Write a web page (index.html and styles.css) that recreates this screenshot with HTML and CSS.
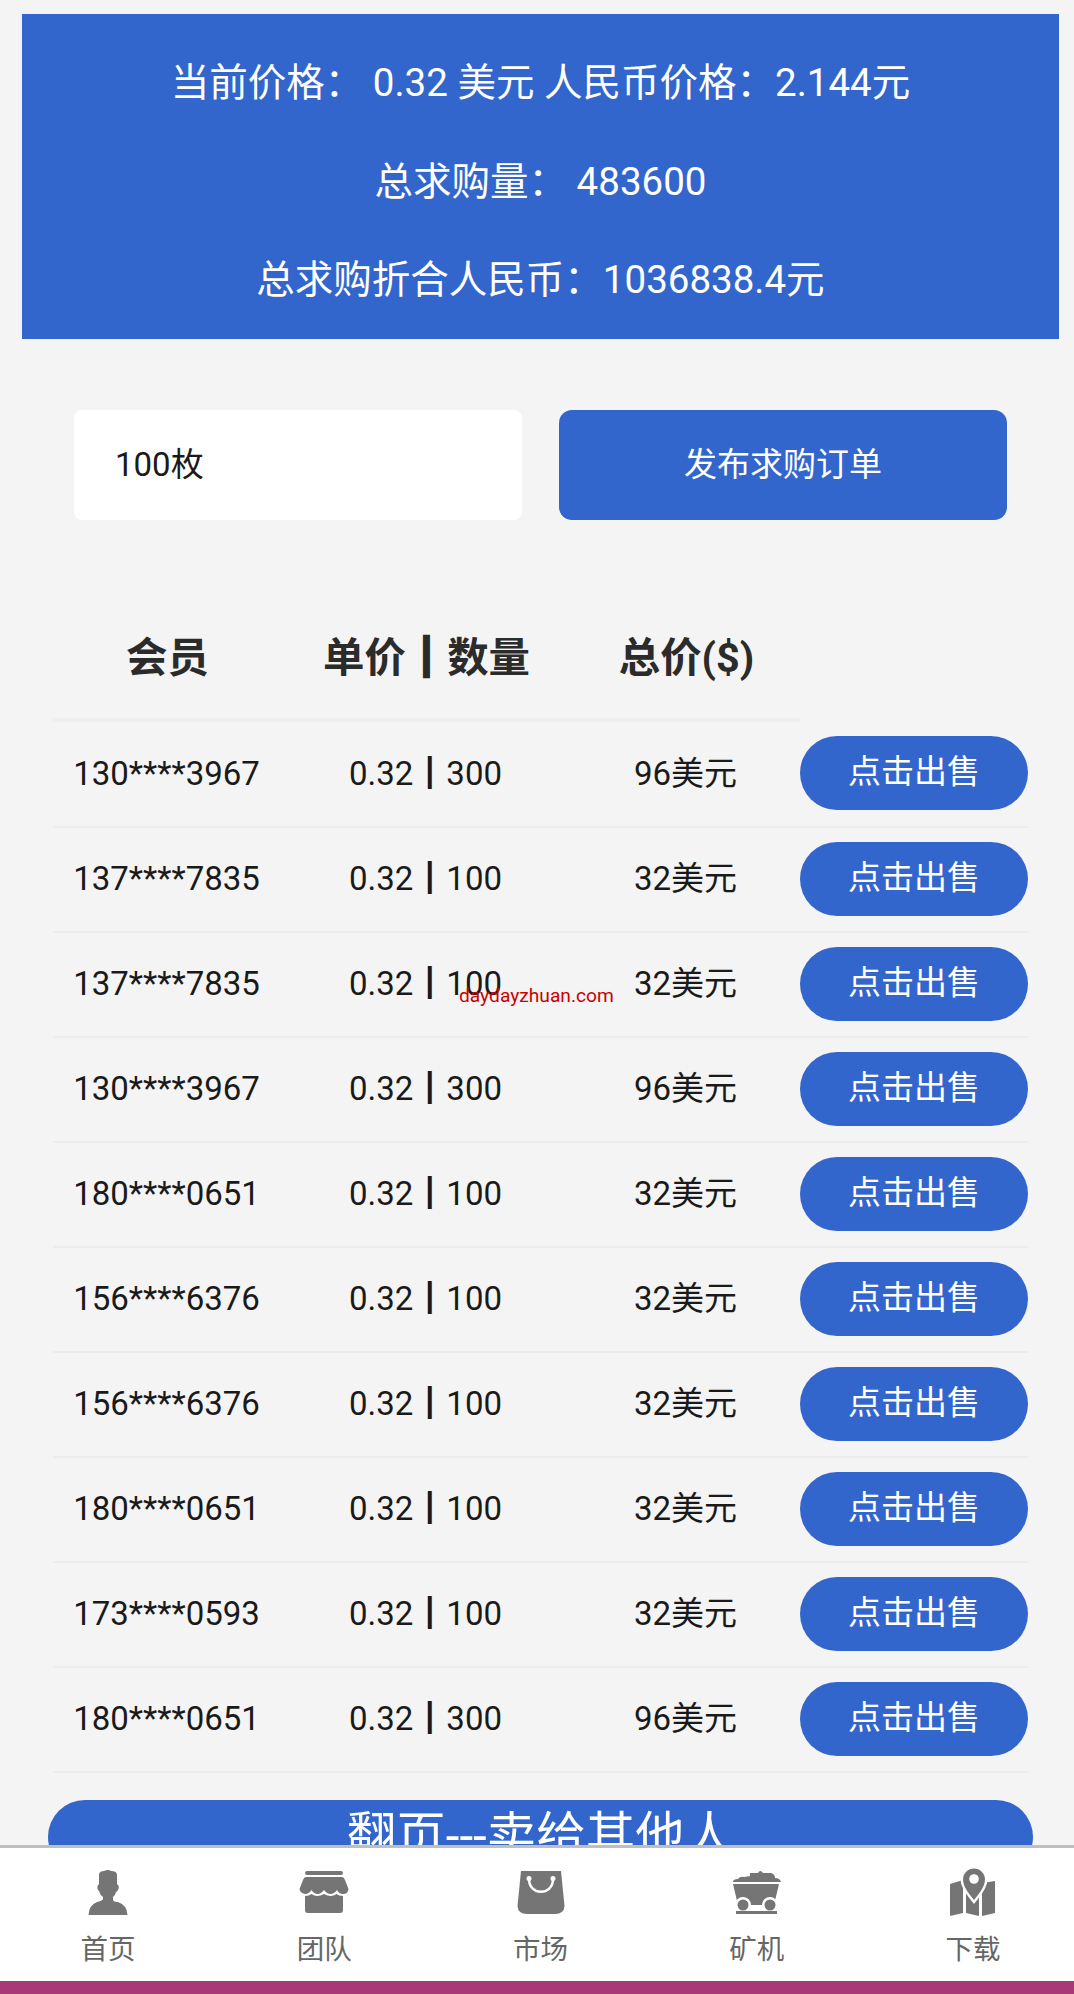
FILE: index.html
```html
<!DOCTYPE html>
<html lang="zh-CN">
<head>
    <meta charset="utf-8">
    <title>市场</title>
    <link rel="stylesheet" href="styles.css">
</head>
<body>
    <div class="page">
        <div class="price-box">
            <p>当前价格： 0.32 美元 人民币价格：2.144元</p>
            <p>总求购量： 483600</p>
            <p>总求购折合人民币：1036838.4元</p>
        </div>

        <div class="order-form">
            <div class="amount">100枚</div>
            <button class="publish">发布求购订单</button>
        </div>

        <!-- Order list -->
        <div class="orders">
            <div class="row head">
                <span>会员</span><span>单价<b>┃</b>数量</span><span>总价($)</span>
            </div>
            <div class="row"><span>130****3967</span><span>0.32┃300</span><span>96美元</span><button class="sell">点击出售</button></div>
            <div class="row"><span>137****7835</span><span>0.32┃100</span><span>32美元</span><button class="sell">点击出售</button></div>
            <div class="row"><span>137****7835</span><span>0.32┃100</span><span>32美元</span><button class="sell">点击出售</button></div>
            <div class="row"><span>130****3967</span><span>0.32┃300</span><span>96美元</span><button class="sell">点击出售</button></div>
            <div class="row"><span>180****0651</span><span>0.32┃100</span><span>32美元</span><button class="sell">点击出售</button></div>
            <div class="row"><span>156****6376</span><span>0.32┃100</span><span>32美元</span><button class="sell">点击出售</button></div>
            <div class="row"><span>156****6376</span><span>0.32┃100</span><span>32美元</span><button class="sell">点击出售</button></div>
            <div class="row"><span>180****0651</span><span>0.32┃100</span><span>32美元</span><button class="sell">点击出售</button></div>
            <div class="row"><span>173****0593</span><span>0.32┃100</span><span>32美元</span><button class="sell">点击出售</button></div>
            <div class="row"><span>180****0651</span><span>0.32┃300</span><span>96美元</span><button class="sell">点击出售</button></div>
        </div>

        <button class="next-page">翻页---卖给其他人</button>
        <div class="watermark">daydayzhuan.com</div>
    </div>

    <!-- Bottom tabs -->
    <nav class="tab-bar">
        <a class="tab">
            <svg viewBox="0 0 50 50"><path d="M16 6 Q17 3 21 3 Q25 1 28 3 Q34 3 34 7 V16 Q37 18 35 22 Q34 24 33 24 Q32 28 30 29 V32 Q31 34 35 34 Q44 37 44.500 47 H5.500 Q6 37 14 34 Q19 33 20 31 V29 Q17 27 16 23 Q14 22 14.500 18 L16 16 Z"/></svg>
            <span>首页</span>
        </a>
        <a class="tab">
            <svg viewBox="0 0 50 50"><rect x="6" y="3" width="38" height="4" rx="2"/><path d="M7 9 H43 Q45 9 46 12 L49.500 21 Q49 26 44 26 Q40 26 38 22 Q35 26 31.500 26 Q28 26 25 22 Q22 26 18.500 26 Q15 26 12.500 22 Q10 26 6 26 Q1 25 0.500 21 L4 12 Q5 9 7 9 Z"/><path d="M6 28 Q10 28 12.500 26 Q18 30 25 26 Q32 30 37.500 26 Q40 28 44 28 V42 Q44 45 41 45 H9 Q6 45 6 42 Z"/></svg>
            <span>团队</span>
        </a>
        <a class="tab">
            <svg viewBox="0 0 50 50"><path d="M5 3 H45 L48.500 38 Q48 46 39 46 H11 Q2 46 1.500 38 Z"/><path class="line" d="M13 11 C13 28 37 28 37 11"/><circle class="cut" cx="13" cy="10.500" r="2.500"/><circle class="cut" cx="37" cy="10.500" r="2.500"/></svg>
            <span>市场</span>
        </a>
        <a class="tab">
            <svg viewBox="0 0 50 50"><path d="M1 14 Q1 11 6 11 Q8 8 12 9 L18 8 V5 H26 Q28 1 31 5 H39 Q43 6 43 10 Q48 10 49 14 Z"/><path d="M1 16 H47 L42 37 H6 Z"/><circle class="wheel" cx="11" cy="37" r="5.500"/><circle class="wheel" cx="38" cy="37" r="5.500"/><rect x="4" y="43" width="41" height="3"/></svg>
            <span>矿机</span>
        </a>
        <a class="tab">
            <svg viewBox="0 0 50 50"><path d="M2 16 L15 12 V45 L2 48 Z M18 12 L31 15 V48 L18 45 Z M34 15 L47 13 V45 L34 48 Z"/><path class="pin" d="M26 32 C22 27 15 19 15 11.500 A11 11 0 0 1 37 11.500 C37 19 30 27 26 32 Z"/><circle class="cut" cx="26" cy="11" r="4.800"/></svg>
            <span>下载</span>
        </a>
    </nav>
    <div class="system-bar"></div>
</body>
</html>
```
FILE: styles.css
```css
* {
    box-sizing: border-box;
}

html {
    overflow: hidden;
}

body {
    width: 1081px;
    height: 1994px;
    margin: 0;
    overflow: hidden;
    display: flex;
    flex-direction: column;
    background: #f4f4f4;
    color: #1a1a1a;
    font-family: Roboto, "Noto Sans CJK SC", sans-serif;
    font-size: 33px;
}

button {
    padding: 0;
    border: none;
    background: #3366cc;
    color: #fff;
    font-family: inherit;
    font-size: 33px;
}

.page {
    position: relative;
    height: 1845px;
    flex: none;
    padding: 14px 22px 0;
    overflow: hidden;
}

.price-box {
    height: 325px;
    padding-top: 20px;
    background: #3366cc;
    color: #fff;
    font-size: 38.5px;
    text-align: center;
}

.price-box p {
    margin: 0;
    height: 98.5px;
    line-height: 98.5px;
}

.order-form {
    display: flex;
    gap: 37px;
    margin: 71px 52px 0;
}

.amount,
.publish {
    width: 448px;
    height: 110px;
    line-height: 110px;
}

.amount {
    padding-left: 41px;
    background: #fff;
    border-radius: 8px;
}

.publish {
    border-radius: 13px;
}

.orders {
    width: 975px;
    margin: 76px 0 0 31px;
}

.row {
    display: grid;
    grid-template-columns: 227px 291px 229px 228px;
    align-items: center;
    height: 105px;
    padding-bottom: 2px;
    border-bottom: 2px solid #ececec;
    text-align: center;
}

.row > span {
    height: 40px;
    line-height: 40px;
}

.row:nth-child(2) {
    height: 106px;
}

.row:nth-child(2) > span {
    margin-top: 2px;
}

.head {
    width: 747px;
    height: 126px;
    padding: 2px 0 0 1px;
    border-bottom: 4px solid #eee;
    color: #2b2b2b;
    font-size: 41.4px;
    font-weight: bold;
}

.head b {
    -webkit-text-stroke: 2px #2b2b2b;
}

.sell {
    height: 74px;
    padding-bottom: 8px;
    border-radius: 37px;
}

.next-page {
    display: block;
    width: 985px;
    height: 74px;
    margin: 27px 0 0 26px;
    padding-bottom: 2px;
    border-radius: 37px;
    font-size: 49.5px;
    line-height: 72px;
}

.watermark {
    position: absolute;
    left: 459px;
    top: 984px;
    color: #c00;
    font-size: 19.2px;
}

.tab-bar {
    display: flex;
    flex: none;
    height: 136px;
    border-top: 3px solid #bfbfbf;
    background: #fff;
}

.tab {
    flex: 1;
    display: flex;
    flex-direction: column;
    align-items: center;
    padding-top: 20px;
    color: #666;
    font-size: 27.5px;
}

.tab svg {
    width: 50px;
    height: 50px;
    fill: #757575;
}

.tab span {
    margin-top: 12px;
    line-height: 40px;
}

.tab .cut {
    fill: #fff;
}

.tab .line {
    fill: none;
    stroke: #fff;
    stroke-width: 2.5px;
}

/* white gap around the shape, fill keeps its full size */
.tab .wheel,
.tab .pin {
    stroke: #fff;
    stroke-width: 5px;
    paint-order: stroke;
}

.system-bar {
    flex: 1;
    background: #a83878;
}
```
